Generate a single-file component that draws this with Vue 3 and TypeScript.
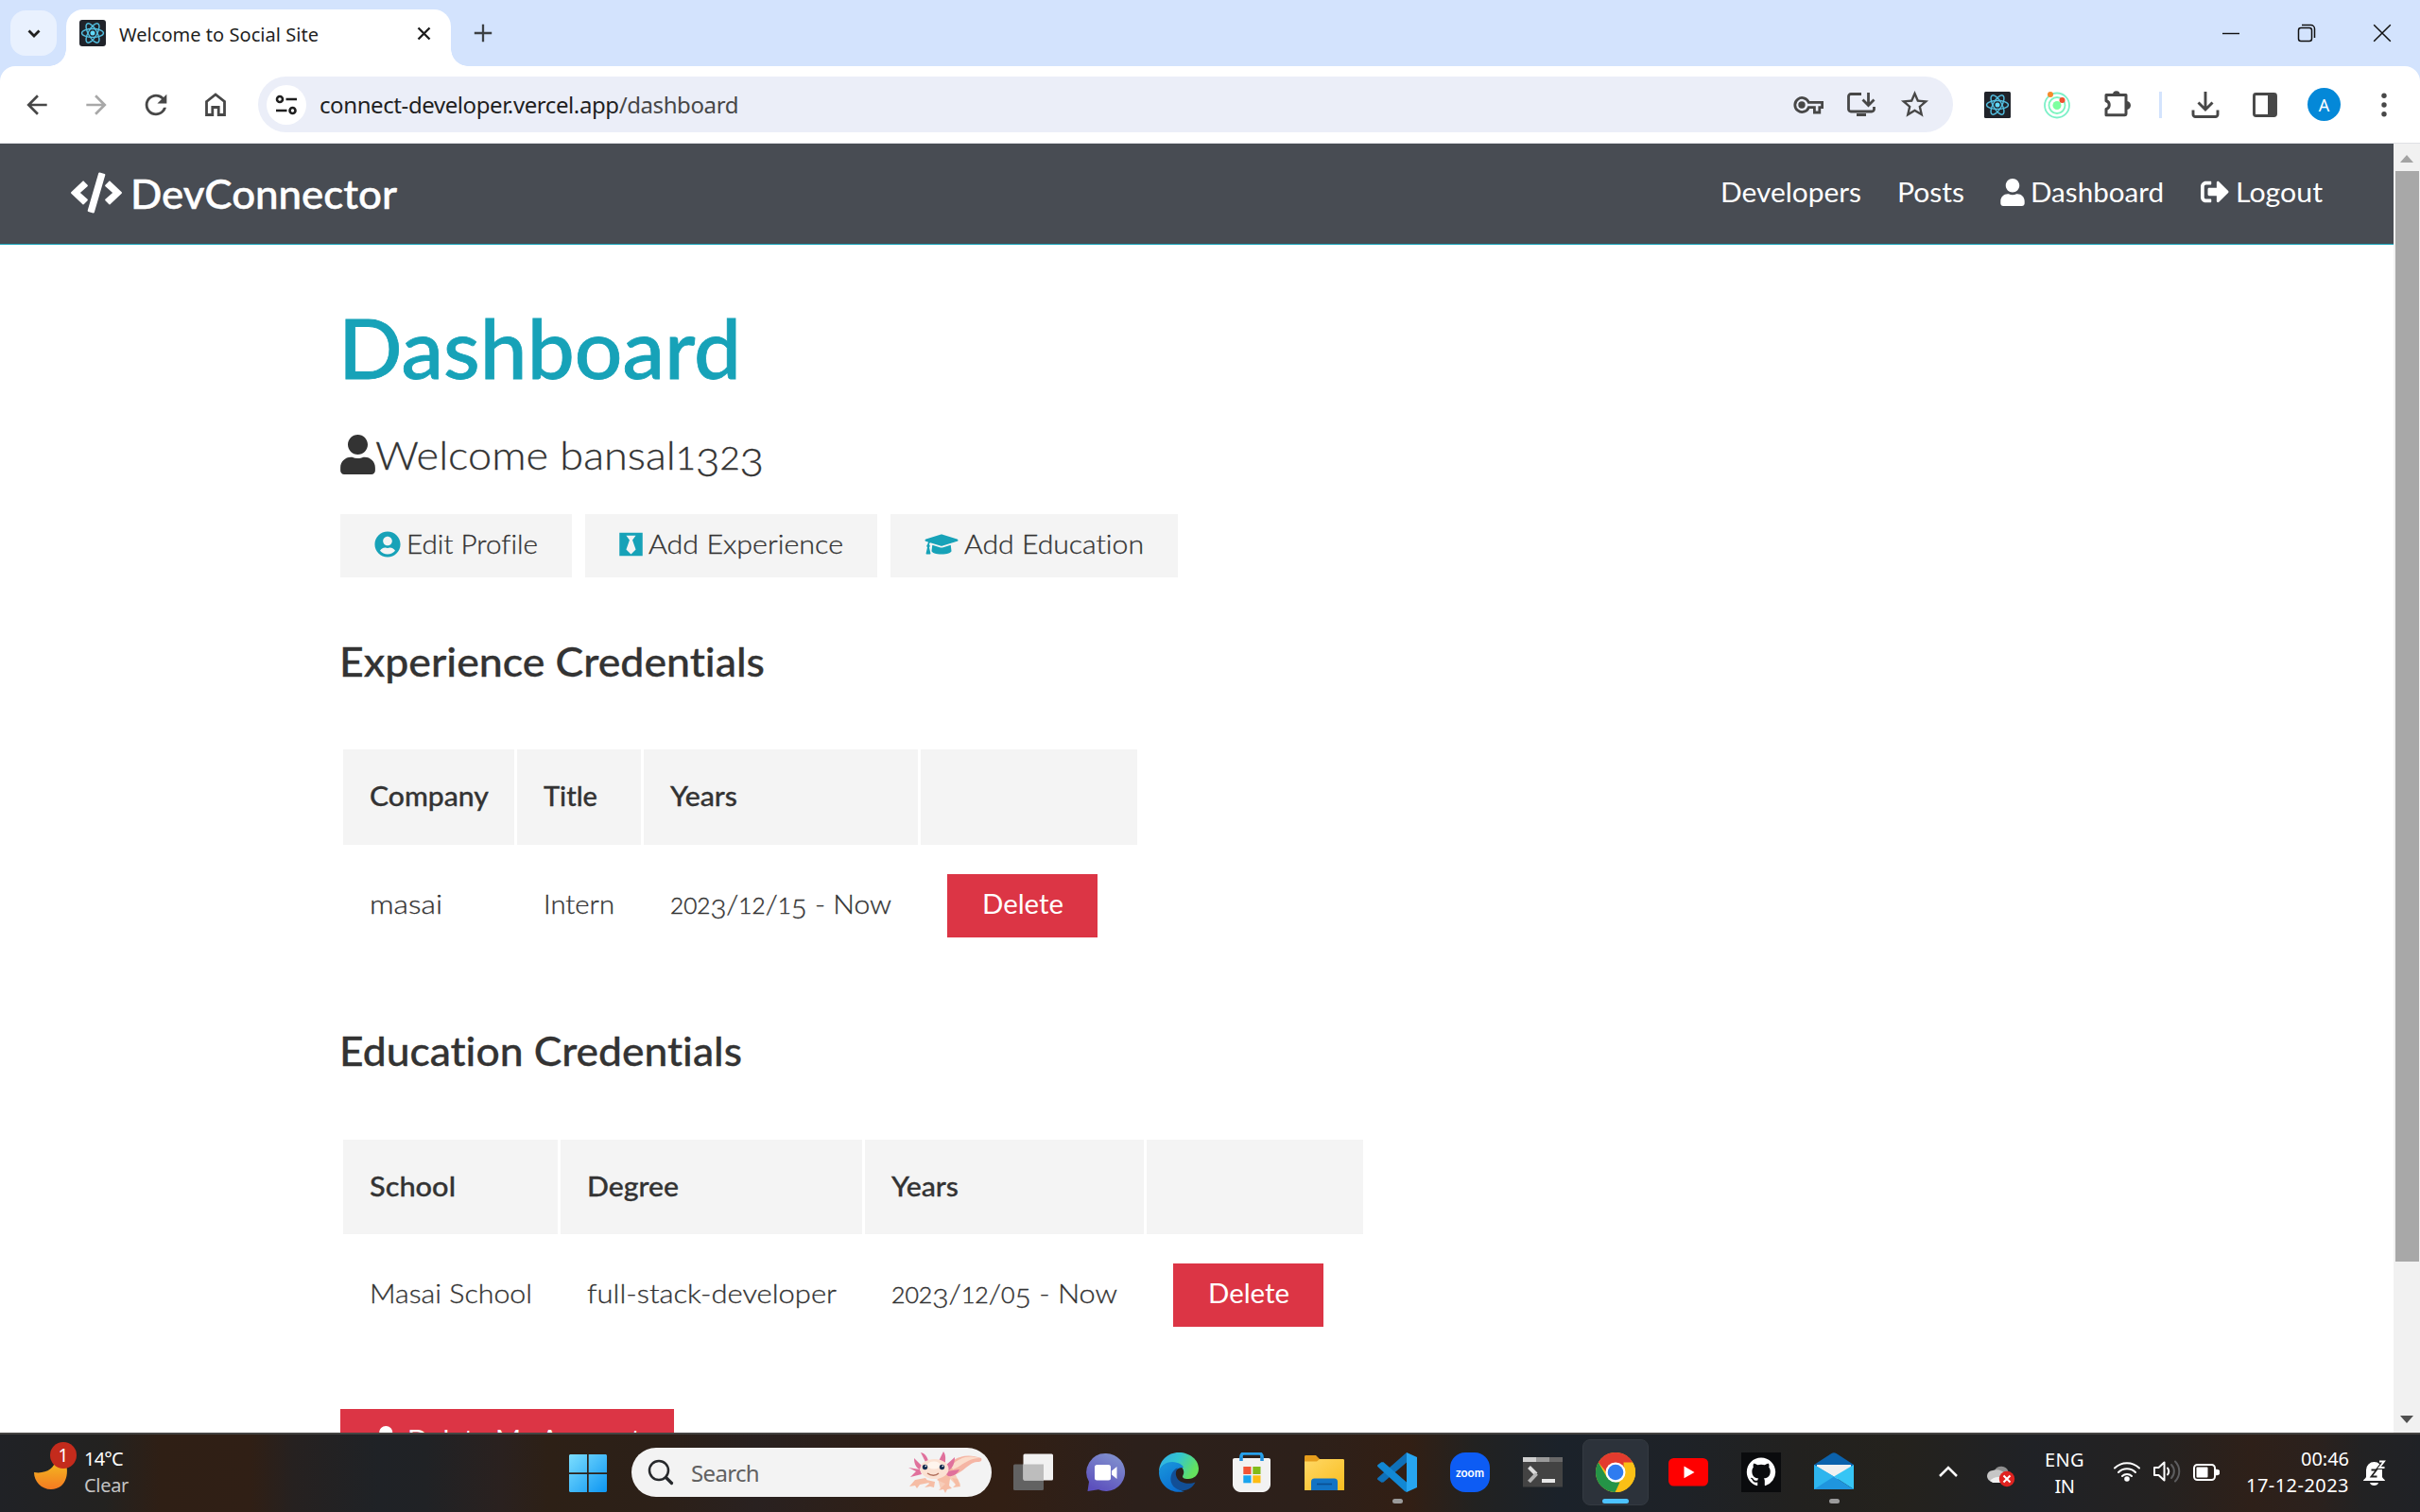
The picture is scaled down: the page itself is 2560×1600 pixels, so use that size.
<script setup lang="ts">
import type { Directive } from 'vue'

// Makes a label fill a fixed advance width: by tracking, or with the
// "stretch" argument by widening the letterforms themselves.
const vFit: Directive<HTMLElement, number> = {
  mounted(el, { value, arg }) {
    if (arg === 'stretch') {
      el.style.display = 'inline-block'
      const natural = el.getBoundingClientRect().width
      el.style.transformOrigin = '0 0'
      el.style.transform = `scaleX(${value / natural})`
      el.style.marginRight = `${value - natural}px`
      return
    }
    const count = (el.textContent ?? '').length
    const natural = el.getBoundingClientRect().width
    el.style.letterSpacing = `${(value - natural) / count}px`
  },
}

interface Label { text: string; width: number }
interface Credentials {
  title: Label
  columns: string
  head: Label[]
  row: Label[]
  id: string
}

const sections: Credentials[] = [
  {
    id: 'experience',
    title: { text: 'Experience Credentials', width: 450 },
    columns: '181px 131px 290px 229px',
    head: [
      { text: 'Company', width: 126 },
      { text: 'Title', width: 57 },
      { text: 'Years', width: 71 },
    ],
    row: [
      { text: 'masai', width: 77 },
      { text: 'Intern', width: 75 },
      { text: '2023/12/15 - Now', width: 234 },
    ],
  },
  {
    id: 'education',
    title: { text: 'Education Credentials', width: 426 },
    columns: '227px 319px 295px 229px',
    head: [
      { text: 'School', width: 91 },
      { text: 'Degree', width: 97 },
      { text: 'Years', width: 71 },
    ],
    row: [
      { text: 'Masai School', width: 172 },
      { text: 'full-stack-developer', width: 264 },
      { text: '2023/12/05 - Now', width: 239 },
    ],
  },
]

// Old-style figures: 0-2 sit at x-height, 3-9 hang below the baseline.
function figure(c: string): string {
  if (/[012]/.test(c)) return 'low'
  if (/[3-9]/.test(c)) return 'hang'
  return ''
}

// Splits a string so that only its digits get elements of their own.
function pieces(text: string): string[] {
  return text.match(/\d|\D+/g) ?? []
}

const userPath = 'M224 256c70.7 0 128-57.3 128-128S294.7 0 224 0 96 57.3 96 128s57.3 128 128 128zm89.6 32h-16.7c-22.2 10.2-46.9 16-72.9 16s-50.6-5.8-72.9-16h-16.7C60.2 288 0 348.2 0 422.4V464c0 26.5 21.5 48 48 48h352c26.5 0 48-21.5 48-48v-41.6c0-74.2-60.2-134.4-134.4-134.4z'
</script>

<template>
  <div class="screen">
    <header class="strip">
      <div class="tab-search">
        <svg width="14" height="9" viewBox="0 0 14 9"><path d="M1.5 1.5 7 7l5.500-5.500" fill="none" stroke="#1f1f1f" stroke-width="2.800" /></svg>
      </div>
      <div class="tab">
        <svg class="favicon" width="28" height="28" viewBox="0 0 28 28">
          <rect width="28" height="28" rx="3" fill="#20232a" />
          <g fill="none" stroke="#53bfe0" stroke-width="1.400">
            <ellipse cx="14" cy="14" rx="11.500" ry="4.500" />
            <ellipse cx="14" cy="14" rx="11.500" ry="4.500" transform="rotate(60 14 14)" />
            <ellipse cx="14" cy="14" rx="11.500" ry="4.500" transform="rotate(120 14 14)" />
          </g>
          <circle cx="14" cy="14" r="2.500" fill="#61dafb" />
        </svg>
        <span class="tab-title"><span v-fit="211">Welcome to Social Site</span></span>
        <svg class="tab-close" width="15" height="15" viewBox="0 0 15 15"><path d="M1.500 1.500l12 12m0-12l-12 12" stroke="#1f1f1f" stroke-width="2.400" /></svg>
      </div>
      <svg class="new-tab" width="20" height="20" viewBox="0 0 20 20"><path d="M10 .8v18.400M.8 10h18.400" stroke="#3c4043" stroke-width="2.300" /></svg>
      <div class="window-buttons">
        <svg width="20" height="20" viewBox="0 0 20 20"><path d="M1 10.500h18" stroke="#111" stroke-width="1.400" /></svg>
        <svg width="20" height="20" viewBox="0 0 20 20"><g fill="none" stroke="#111" stroke-width="1.500"><rect x="1.500" y="4.500" width="14" height="14" rx="2.500" /><path d="M5 1.500h9.500a4 4 0 0 1 4 4V15" /></g></svg>
        <svg width="20" height="20" viewBox="0 0 20 20"><path d="M1.200 1.200l17.600 17.600m0-17.600L1.200 18.800" stroke="#111" stroke-width="1.500" /></svg>
      </div>
    </header>

    <div class="toolbar-back">
      <div class="toolbar">
        <span class="tool"><svg width="32" height="32" viewBox="0 0 24 24" fill="#474747"><path d="M20 11H7.830l5.590-5.590L12 4l-8 8 8 8 1.410-1.410L7.830 13H20v-2z" /></svg></span>
        <span class="tool"><svg width="32" height="32" viewBox="0 0 24 24" fill="#a8a8a8"><path d="M12 4l-1.410 1.410L16.170 11H4v2h12.170l-5.580 5.590L12 20l8-8z" /></svg></span>
        <span class="tool"><svg width="34" height="34" viewBox="0 0 24 24" fill="#474747"><path d="M17.650 6.350A7.958 7.958 0 0 0 12 4c-4.420 0-7.990 3.580-7.990 8s3.570 8 7.990 8c3.730 0 6.840-2.550 7.730-6h-2.080A5.990 5.990 0 0 1 12 18c-3.310 0-6-2.690-6-6s2.690-6 6-6c1.660 0 3.140.69 4.220 1.780L13 11h7V4l-2.350 2.350z" /></svg></span>
        <span class="tool"><svg width="24" height="27" viewBox="0 0 24 27"><path d="M2.500 10.500 12 3l9.500 7.500V24.500h-6.300v-8H8.800v8H2.500z" fill="none" stroke="#474747" stroke-width="2.800" /></svg></span>
        <div class="omnibox">
          <span class="site-info">
            <svg width="24" height="22" viewBox="0 0 24 22" fill="none" stroke="#1f1f1f" stroke-width="2.600"><circle cx="5" cy="5" r="3" /><path d="M11.500 5H23M1 17h11.500" /><circle cx="18.500" cy="17" r="3" /></svg>
          </span>
          <span class="url"><span v-fit="443">connect-developer.vercel.app<span class="path">/dashboard</span></span></span>
          <span class="omni-tool"><svg width="32" height="20" viewBox="0 0 32 20" fill="none" stroke="#474747" stroke-width="2.800"><path d="M16.300 7.300H30.600v5.400h-2.800v5.300h-5.400v-5.300h-6.100A7.500 7.500 0 1 1 16.300 7.300z" /><circle cx="9" cy="10" r="2.300" fill="#474747" /></svg></span>
          <span class="omni-tool"><svg width="30" height="27" viewBox="0 0 30 27" fill="none" stroke="#474747" stroke-width="2.800"><path d="M15 2.500H4A2.500 2.500 0 0 0 1.500 5v13.500A2.500 2.500 0 0 0 4 21h22a2.500 2.500 0 0 0 2.500-2.500V16M22.500 1v13M16.500 8.500l6 6 6-6M10 24.500h10" /></svg></span>
          <span class="omni-tool"><svg width="35" height="35" viewBox="0 0 24 24" fill="#474747"><path d="M22 9.240l-7.190-.62L12 2 9.190 8.630 2 9.240l5.460 4.730L5.820 21 12 17.270 18.180 21l-1.630-7.030L22 9.240zM12 15.400l-3.760 2.270 1-4.280-3.320-2.880 4.380-.38L12 6.100l1.710 4.040 4.380.38-3.320 2.880 1 4.280L12 15.400z" /></svg></span>
        </div>
        <span class="tool"><svg width="28" height="28" viewBox="0 0 28 28">
          <rect width="28" height="28" rx="1.500" fill="#20232a" />
          <g fill="none" stroke="#53bfe0" stroke-width="1.400">
            <ellipse cx="14" cy="14" rx="11.500" ry="4.500" />
            <ellipse cx="14" cy="14" rx="11.500" ry="4.500" transform="rotate(60 14 14)" />
            <ellipse cx="14" cy="14" rx="11.500" ry="4.500" transform="rotate(120 14 14)" />
          </g>
          <circle cx="14" cy="14" r="2.500" fill="#61dafb" />
        </svg></span>
        <span class="tool"><svg width="30" height="30" viewBox="0 0 30 30" fill="none">
          <circle cx="15" cy="15.500" r="13" stroke="#7df0c8" stroke-width="1.800" /><circle cx="15" cy="15.500" r="8.500" stroke="#7df5c0" stroke-width="1.800" />
          <circle cx="15" cy="15.500" r="4.500" fill="#7dff9f" /><circle cx="8" cy="4" r="3" fill="#f58a2b" /><circle cx="20.500" cy="10" r="3" fill="#f0512f" />
        </svg></span>
        <span class="tool puzzle"><svg width="30" height="29" viewBox="0 0 30 29"><path d="M3 5.500h21v19.700c0 .9-.6 1.500-1.500 1.500H3v-6.200a4.600 4.600 0 0 0 0-8.800z" fill="none" stroke="#474747" stroke-width="3" stroke-linejoin="round" /><path d="M10 5a3.800 3.800 0 0 1 7.600 0zM24.500 12a4.500 4.500 0 0 1 0 9z" fill="#474747" /></svg></span>
        <span class="divider"></span>
        <span class="tool"><svg width="30" height="28" viewBox="0 0 30 28" fill="none" stroke="#474747" stroke-width="2.900"><path d="M15 0v18M7.500 11.500 15 19l7.500-7.500M2 19.500V24a2.400 2.400 0 0 0 2.400 2.500h21.200A2.400 2.400 0 0 0 28 24v-4.500" /></svg></span>
        <span class="tool"><svg width="26" height="26" viewBox="0 0 26 26"><rect x="1.500" y="1.500" width="23" height="23" rx="2" fill="none" stroke="#474747" stroke-width="2.900" /><path d="M16 1h8v24h-8z" fill="#474747" /></svg></span>
        <span class="tool"><span class="avatar">A</span></span>
        <span class="tool"><svg width="6" height="26" viewBox="0 0 6 26" fill="#474747"><circle cx="3" cy="3.200" r="2.700" /><circle cx="3" cy="13" r="2.700" /><circle cx="3" cy="22.800" r="2.700" /></svg></span>
      </div>
    </div>

    <div class="viewport">
      <div class="page">
        <nav class="navbar">
          <svg class="code" width="54" height="44" viewBox="0 0 640 512" fill="#fff"><path d="M278.900 511.500l-61-17.700c-6.400-1.800-10-8.500-8.200-14.900L346.200 8.700c1.800-6.400 8.500-10 14.900-8.200l61 17.700c6.400 1.800 10 8.500 8.200 14.900L293.800 503.300c-1.900 6.400-8.500 10.100-14.900 8.200zm-114-112.200l43.500-46.400c4.600-4.900 4.300-12.700-.8-17.200L117 256l90.600-79.700c5.100-4.500 5.500-12.300.8-17.200l-43.500-46.400c-4.500-4.800-12.100-5.100-17-.5L3.800 247.200c-5.100 4.700-5.100 12.800 0 17.500l144.100 135.100c4.900 4.600 12.500 4.400 17-.5zm327.200.6l144.100-135.100c5.100-4.700 5.100-12.800 0-17.500L492.100 112.100c-4.800-4.500-12.400-4.300-17 .5L431.600 159c-4.600 4.900-4.300 12.700.8 17.200L523 256l-90.600 79.700c-5.100 4.500-5.500 12.300-.8 17.200l43.500 46.400c4.500 4.900 12.100 5.100 17 .6z" /></svg>
          <span class="brand"><span v-fit:stretch="282">DevConnector</span></span>
          <span class="link developers"><span v-fit:stretch="149">Developers</span></span>
          <span class="link posts"><span v-fit:stretch="71">Posts</span></span>
          <svg class="nav-user" width="26" height="29" viewBox="0 0 448 512" fill="#fff"><path :d="userPath" /></svg>
          <span class="link"><span v-fit:stretch="141">Dashboard</span></span>
          <svg class="nav-out" width="30" height="30" viewBox="0 0 512 512" fill="#fff"><path d="M497 273L329 441c-15 15-41 4.500-41-17v-96H152c-13.300 0-24-10.700-24-24v-96c0-13.300 10.700-24 24-24h136V88c0-21.400 25.900-32 41-17l168 168c9.300 9.400 9.300 24.600 0 34zM192 436v-40c0-6.600-5.400-12-12-12H96c-17.700 0-32-14.300-32-32V160c0-17.700 14.300-32 32-32h84c6.600 0 12-5.400 12-12V76c0-6.600-5.400-12-12-12H96c-53 0-96 43-96 96v192c0 53 43 96 96 96h84c6.600 0 12-5.400 12-12z" /></svg>
          <span class="link"><span v-fit:stretch="92">Logout</span></span>
        </nav>

        <main class="container">
          <h1><span v-fit:stretch="426">Dashboard</span></h1>
          <p class="welcome">
            <svg width="37" height="42" viewBox="0 0 448 512" fill="#333"><path :d="userPath" /></svg>
            <span v-fit:stretch="411">Welcome bansal<span v-for="(c, i) in '1323'" :key="i" :class="figure(c)">{{ c }}</span></span>
          </p>
          <div class="actions">
            <a class="btn edit"><svg width="28" height="28" viewBox="0 0 496 512"><path d="M248 8C111 8 0 119 0 256s111 248 248 248 248-111 248-248S385 8 248 8zm0 96c48.600 0 88 39.400 88 88s-39.400 88-88 88-88-39.400-88-88 39.400-88 88-88zm0 344c-58.700 0-111.300-26.600-146.500-68.200 18.800-35.400 55.600-59.800 98.500-59.800 2.400 0 4.800.4 7.100 1.100 13 4.200 26.600 6.900 40.900 6.900 14.300 0 28-2.700 40.900-6.900 2.300-.7 4.700-1.100 7.100-1.100 42.900 0 79.700 24.400 98.500 59.800C359.300 421.400 306.700 448 248 448z" /></svg><span v-fit:stretch="139">Edit Profile</span></a>
            <a class="btn exp"><svg width="25" height="28" viewBox="0 0 448 512"><path d="M0 32v448h448V32H0zm316.500 325.200L224 445.900l-92.500-88.700 64.500-184-64.500-86.600h184.900L252 173.200l64.500 184z" /></svg><span v-fit:stretch="206">Add Experience</span></a>
            <a class="btn edu"><svg width="36" height="28" viewBox="0 0 640 512"><path d="M622.340 153.200L343.400 67.500c-15.200-4.670-31.600-4.670-46.790 0L17.660 153.200c-23.540 7.230-23.540 38.360 0 45.590l48.630 14.940c-10.670 13.190-17.230 29.280-17.880 46.900C38.780 266.150 32 276.110 32 288c0 10.780 5.680 19.850 13.860 25.650L20.330 428.530C18.110 438.520 25.710 448 35.940 448h56.110c10.240 0 17.840-9.480 15.620-19.470L82.140 313.650C90.320 307.850 96 298.780 96 288c0-11.570-6.470-21.250-15.660-26.870.76-15.020 8.440-28.300 20.690-36.720L296.600 284.500c9.060 2.780 26.440 6.250 46.790 0l278.950-85.700c23.550-7.240 23.550-38.360 0-45.600zM352.790 315.090c-28.530 8.760-52.840 3.920-65.590 0l-145.020-44.550L128 384c0 35.350 85.960 64 192 64s192-28.650 192-64l-14.180-113.470-145.030 44.560z" /></svg><span v-fit:stretch="190">Add Education</span></a>
          </div>

          <section v-for="s in sections" :key="s.id" :class="s.id">
            <h2><span v-fit:stretch="s.title.width">{{ s.title.text }}</span></h2>
            <div class="table" :style="{ gridTemplateColumns: s.columns }">
              <div v-for="h in s.head" :key="h.text" class="th"><span v-fit:stretch="h.width">{{ h.text }}</span></div>
              <div class="th"></div>
              <div v-for="d in s.row" :key="d.text" class="td"><span v-fit:stretch="d.width"><span v-for="(c, i) in pieces(d.text)" :key="i" :class="figure(c)">{{ c }}</span></span></div>
              <div class="td"><button class="danger"><span v-fit:stretch="86">Delete</span></button></div>
            </div>
          </section>

          <button class="danger account">
            <svg width="35" height="28" viewBox="0 0 640 512" fill="#fff"><path d="M624 208H432c-8.800 0-16 7.200-16 16v32c0 8.800 7.200 16 16 16h192c8.800 0 16-7.200 16-16v-32c0-8.800-7.200-16-16-16zm-400 48c70.700 0 128-57.300 128-128S294.700 0 224 0 96 57.300 96 128s57.300 128 128 128z" /></svg>
            <span v-fit:stretch="247">Delete My Account</span>
          </button>
        </main>
      </div>
      <div class="scrollbar">
        <svg width="14" height="8" viewBox="0 0 14 8"><path d="M7 0l7 8H0z" fill="#a3a3a3" /></svg>
        <div class="thumb"></div>
        <svg class="down" width="14" height="8" viewBox="0 0 14 8"><path d="M7 8l7-8H0z" fill="#505050" /></svg>
      </div>
    </div>

    <footer class="taskbar">
      <svg class="moon" width="48" height="52" viewBox="0 0 48 52">
        <defs><linearGradient id="moonFill" x1="0" y1="0" x2="0" y2="1"><stop offset="0" stop-color="#f3c421" /><stop offset="1" stop-color="#f47a21" /></linearGradient></defs>
        <path d="M3 32c12 2 22-4 23-14l8-2c8 14 4 34-13 34C11 50 3 42 3 32z" fill="url(#moonFill)" />
        <circle cx="34" cy="14" r="14" fill="#c42b1c" />
        <text x="34" y="21" text-anchor="middle" font-family="Noto Sans, sans-serif" font-size="19" fill="#fff">1</text>
      </svg>
      <div class="weather"><span><span v-fit="41">14°C</span></span><span class="dim"><span v-fit="47">Clear</span></span></div>

      <svg class="start" width="42" height="42" viewBox="0 0 42 42">
        <defs><linearGradient id="win" gradientUnits="userSpaceOnUse" x1="0" y1="0" x2="42" y2="42"><stop offset="0" stop-color="#7fe0ff" /><stop offset="1" stop-color="#0a94f2" /></linearGradient></defs>
        <g fill="url(#win)"><path d="M2.500 1H20v19.300H1V2.500C1 1.700 1.700 1 2.500 1zM21.700 1H39.500c.8 0 1.500.7 1.500 1.500v17.800H21.700zM1 22h19v19H2.500c-.8 0-1.500-.7-1.500-1.500zM21.700 22H41v17.500c0 .8-.7 1.500-1.500 1.500H21.700z" /></g>
      </svg>

      <div class="search">
        <svg width="28" height="28" viewBox="0 0 28 28" fill="none" stroke="#26282b" stroke-width="2.500" stroke-linecap="round"><circle cx="12" cy="12" r="10" /><path d="M19.500 19.500 25.500 25.500" stroke-width="3.200" /></svg>
        <span class="placeholder"><span v-fit="72">Search</span></span>
        <svg class="axolotl" width="80" height="46" viewBox="0 0 80 46">
          <path d="M40 17C50 7 62 2 78 8c1 2 0 4-3 4-9-1-14 10-28 15z" fill="#f5b5a4" />
          <path d="M46 16C54 8 63 4 76 8c-12 0-18 8-28 12z" fill="#fbdccb" />
          <path d="M30 22c10-3 20 0 22 6l4 8-4 1-7-7-4 8-6 3-3-12z" fill="#f7cdb9" />
          <g fill="#e0719c"><path d="M19 12 14 2c5 1 7 5 8 9zM33 11 38 1c3 4 2 8 2 12zM15 16 7 8c0 6 2 10 6 12zM13 20 1 18l8 4-6 6 12-3zM40 16l10-9c0 6-2 12-8 15zM41 22l14-2c-3 6-8 8-14 7z" /></g>
          <path d="M19 29 8 31l-6 7 6-1 2 3 3-4 10-2zM31 31l9 4-7 7 5-1 2 4 2-4 5-1-3-3 1-8-5-5zM20 31l3 4-5 4 6-1 4 1 1-6zM47 29l4 7-3 3 8-1-3-8z" fill="#f6bda5" />
          <ellipse cx="28.500" cy="19.500" rx="15" ry="10.500" fill="#fbe1d2" />
          <ellipse cx="28" cy="15.500" rx="7" ry="4" fill="#fff5ed" />
          <g fill="#152c50"><circle cx="18.500" cy="17.500" r="2.700" /><circle cx="36.500" cy="17.500" r="2.700" /></g>
          <g fill="#fff"><circle cx="19.300" cy="16.400" r=".8" /><circle cx="37.300" cy="16.400" r=".8" /></g>
          <path d="M21 24c4 3 9 3 12 0" fill="none" stroke="#b06f5b" stroke-width="1.400" />
        </svg>
      </div>

      <div class="apps">
        <span class="app"><svg viewBox="0 0 42 42">
          <rect y="12.500" width="32" height="27.500" rx="1.500" fill="#626262" /><rect x="10.500" y="1.500" width="31.500" height="28" rx="1.500" fill="#f1f1f1" /><path d="M10.500 12.500H32v17H12a1.500 1.500 0 0 1-1.500-1.500z" fill="#bdbdbd" />
        </svg></span>
        <span class="app"><svg viewBox="0 0 42 42">
          <defs><linearGradient id="chat" x1=".8" y1="0" x2=".3" y2="1"><stop offset="0" stop-color="#8293cf" /><stop offset="1" stop-color="#5c4fbd" /></linearGradient></defs>
          <path d="M21 1a20 20 0 1 1-8 38.300L1.500 41 3 31A20 20 0 0 1 21 1z" fill="url(#chat)" /><rect x="9" y="13" width="17" height="16.500" rx="2.500" fill="#fff" /><path d="M27 19.500l5.500-4.500v13L27 23.500z" fill="#fff" />
        </svg></span>
        <span class="app"><svg viewBox="0 0 42 42">
          <defs>
            <linearGradient id="edgeTop" x1="0" y1="0" x2="1" y2=".4"><stop offset="0" stop-color="#2fa9ec" /><stop offset=".5" stop-color="#33c6cf" /><stop offset="1" stop-color="#64e25e" /></linearGradient>
            <linearGradient id="edgeBlue" x1="0" y1="0" x2=".5" y2="1"><stop offset="0" stop-color="#1a98dc" /><stop offset="1" stop-color="#0b6fd0" /></linearGradient>
          </defs>
          <path d="M0 21C0 9 9 0 21 0s21 8 21 17c0 7-5 11-11 11-5 0-7-1.500-5.500-4C28 20 25 12 14 11 6 11 2 15 0 21z" fill="url(#edgeTop)" />
          <path d="M0 21c1-7 7-11 14-11 7 .5 11 3 12 6-6-1-12 5-11 12 1 8 7 13 12 13C13 45 0 34 0 21z" fill="url(#edgeBlue)" />
          <path d="M18 17c-7 5-8 16 0 21 8 5 17 1 20.500-6.500-7 3-19 1-20.500-7.500-.5-3 .5-5.500 2-7.500z" fill="#124f96" />
        </svg></span>
        <span class="app"><svg viewBox="0 0 42 42">
          <path d="M10 10V4a3 3 0 0 1 3-3h16a3 3 0 0 1 3 3v6" fill="none" stroke="#27a0ea" stroke-width="3.500" /><path d="M3 6h36c1.200 0 2 .8 2 2v26c0 4-4 8-8 8H9c-4 0-8-4-8-8V8c0-1.200.8-2 2-2z" fill="#f2f2f2" /><path d="M10 9V5m22 4V5" stroke="#1c8fdd" stroke-width="3.500" />
          <path d="M12.300 15h8.200v8h-8.200z" fill="#f25435" /><path d="M22.300 15h8.200v8h-8.200z" fill="#82bb18" /><path d="M12.300 24.300h8.200v8h-8.200z" fill="#18a4ee" /><path d="M22.300 24.300h8.200v8h-8.200z" fill="#fdbc11" />
        </svg></span>
        <span class="app"><svg viewBox="0 0 42 42">
          <defs><linearGradient id="folder" x1="0" y1="0" x2="1" y2="1"><stop offset="0" stop-color="#ffd865" /><stop offset="1" stop-color="#f9bd1f" /></linearGradient></defs>
          <path d="M0 4.500C0 3.500.5 3 1.500 3H12l4 4v6H0z" fill="#e69d1c" /><path d="M0 9.500h13l3-2.500h24.500c1 0 1.500.5 1.500 1.500V40H0z" fill="url(#folder)" /><path d="M7 40V31a3.500 3.500 0 0 1 3.500-3.500h21A3.500 3.500 0 0 1 35 31v9z" fill="#1273c4" /><path d="M13 33.500h16" stroke="#0b4f92" stroke-width="1.600" />
        </svg></span>
        <span class="app running"><svg viewBox="0 0 42 42">
          <path d="M31 0l11 5v32l-11 5z" fill="#27a6f2" /><path d="M31 10.500 6.500 31.500l-2 .2L.6 29c-.8-.6-.8-1.500 0-2.200L31 0z" fill="#0f70b8" /><path d="M31 31.500 6.500 10.300l-2.200-.1L.6 13c-.8.600-.8 1.500 0 2.200L29 41l2 1z" fill="#1288d4" />
        </svg></span>
        <span class="app"><svg viewBox="0 0 42 42">
          <rect width="42" height="42" rx="16" fill="#0d5cf4" /><text x="21" y="25.500" text-anchor="middle" font-family="Lato, sans-serif" font-weight="700" font-size="14" textLength="30" lengthAdjust="spacingAndGlyphs" fill="#fff">zoom</text>
        </svg></span>
        <span class="app"><svg viewBox="0 0 42 42">
          <path d="M0 5h42v31.500H0z" fill="#434343" /><path d="M0 5h14v5H0z" fill="#cfcfcf" /><path d="M14 5h14v5H14z" fill="#9a9a9a" /><path d="M28 5h14v5H28z" fill="#686868" /><path d="M6.500 15.500 14 23" stroke="#dedede" stroke-width="4" /><path d="M14.500 22.500 6.500 31" stroke="#b5b5b5" stroke-width="4" /><path d="M20 28h14v4H20z" fill="#e8e8e8" />
        </svg></span>
        <span class="app active"><svg viewBox="0 0 42 42">
          <circle cx="21" cy="21" r="21" fill="#fbc016" /><path d="M21 21H11.500l-8.700-10.500A21 21 0 0 1 39.200 10.500z" fill="#e33b2e" /><path d="M2.800 10.500 12 26.500l9 5h4.500L20.700 42A21 21 0 0 1 2.800 10.500z" fill="#249447" /><path d="M20.700 42 30 26.500 29.500 10.500h9.700A21 21 0 0 1 20.700 42z" fill="#fbc016" /><circle cx="21" cy="21" r="10.500" fill="#fff" /><circle cx="21" cy="21" r="8.300" fill="#2f7cf0" />
        </svg></span>
        <span class="app"><svg viewBox="0 0 42 42"><rect y="6" width="42" height="29.500" rx="5.500" fill="#f00" /><path d="M16.500 14.500v12.800L27.500 21z" fill="#fff" /></svg></span>
        <span class="app"><svg viewBox="0 0 42 42">
          <path d="M0 0h42v42H0z" fill="#0a0b0d" /><g transform="translate(5.800 5.500) scale(1.900)"><path fill="#fff" d="M8 0C3.580 0 0 3.580 0 8c0 3.540 2.290 6.530 5.470 7.590.4.07.55-.17.55-.38 0-.19-.01-.82-.01-1.490-2.010.37-2.530-.49-2.690-.94-.09-.23-.48-.94-.82-1.130-.28-.15-.68-.52-.01-.53.63-.01 1.080.58 1.230.82.72 1.210 1.870.87 2.330.66.07-.52.28-.87.51-1.070-1.780-.2-3.640-.89-3.640-3.950 0-.87.31-1.590.82-2.150-.08-.2-.36-1.020.08-2.120 0 0 .67-.21 2.200.82.64-.18 1.320-.27 2-.27s1.360.09 2 .27c1.530-1.040 2.200-.82 2.200-.82.44 1.100.16 1.920.08 2.120.51.56.82 1.270.82 2.150 0 3.070-1.870 3.750-3.650 3.950.29.25.54.73.54 1.480 0 1.070-.01 1.930-.01 2.200 0 .21.15.46.55.38A8.010 8.010 0 0 0 16 8c0-4.420-3.580-8-8-8z" /></g>
        </svg></span>
        <span class="app running"><svg viewBox="0 0 42 42">
          <path d="M0 13 18.500 1c1.600-1 3.400-1 5 0L42 13v5H0z" fill="#0b62ac" /><path d="M3 13h36v10L21 30 3 23z" fill="#f1f1f1" /><path d="M42 13v26L21 25.500z" fill="#36c5f5" /><path d="M0 13 21 25.500 42 39H0z" fill="#1f95de" /><path d="M0 13 21 25.500 0 39z" fill="#2eb5ee" />
        </svg></span>
      </div>

      <div class="tray">
        <svg class="chevron" width="22" height="14" viewBox="0 0 22 14"><path d="M2 12 11 3l9 9" fill="none" stroke="#fff" stroke-width="2.500" /></svg>
        <svg class="cloud" width="30" height="26" viewBox="0 0 30 26"><path d="M8 8a8 8 0 0 1 14.500 1L25 14H8z" fill="#8f8f8f" /><path d="M6 20a6 6 0 0 1 0-12c5-2 10 0 14 4l-5 8z" fill="#c6c6c6" /><path d="M3 19c4-4 8-5 14-3v5H6z" fill="#f0f0f0" /><circle cx="21" cy="17" r="8.200" fill="#e02320" /><path d="M17.500 13.500l7 7m0-7l-7 7" stroke="#fff" stroke-width="2" /></svg>
        <div class="lang"><span><span v-fit="42">ENG</span></span><span><span v-fit="21">IN</span></span></div>
        <svg class="wifi" width="30" height="24" viewBox="0 0 30 24" fill="none" stroke="#fff" stroke-width="2" stroke-linecap="round"><path d="M2 8.500a18.500 18.500 0 0 1 26 0M6 13a12.700 12.700 0 0 1 18 0M10 17a7 7 0 0 1 10 0" /><circle cx="15" cy="20" r="1.800" fill="#fff" /></svg>
        <svg class="sound" width="30" height="26" viewBox="0 0 30 26" fill="none" stroke-width="2" stroke-linecap="round"><path d="M2 9h4.500l6-5.500v19L6.500 17H2z" stroke="#fff" stroke-linejoin="round" /><path d="M16 9.500a6 6 0 0 1 0 7" stroke="#fff" /><path d="M20 6a10 10 0 0 1 0 14M24 2.500a15 15 0 0 1 0 21" stroke="#5d5d5f" /></svg>
        <svg class="battery" width="30" height="20" viewBox="0 0 30 20"><rect x="2" y="2" width="22" height="16" rx="3.500" fill="none" stroke="#fff" stroke-width="2" /><rect x="4.500" y="4.500" width="12" height="11" rx="1" fill="#fff" /><path d="M25.500 7l3 1v4l-3 1z" fill="#fff" stroke="#fff" /></svg>
        <div class="clock"><span><span v-fit="51">00:46</span></span><span><span v-fit="109">17-12-2023</span></span></div>
        <svg class="bell" width="26" height="30" viewBox="0 0 26 30"><path d="M1 23c0-1.500 2.200-2 3-4v-7.500a8.500 8.500 0 0 1 17 0V19c.8 2 3 2.500 3 4zM8 25h9c-.6 4-8.400 4-9 0z" fill="#fff" /><path d="M9.500 11.500h5.500l-5.500 7h6" fill="none" stroke="#222" stroke-width="1.800" /><path d="M18 2.500h5L18 9h5.500" fill="none" stroke="#222" stroke-width="4" /><path d="M18 2.500h5L18 9h5.500" fill="none" stroke="#fff" stroke-width="1.900" /></svg>
      </div>
    </footer>
  </div>
</template>

<style>
body { margin: 0; background: #fff; overflow: hidden; }
</style>

<style scoped>
.screen { width: 2560px; height: 1600px; display: flex; flex-direction: column; overflow: hidden; font-family: "Noto Sans", "Open Sans", sans-serif; color: #1f1f1f; }
.screen * { box-sizing: border-box; }
svg { display: block; flex: none; }
span { white-space: pre; }

.strip { height: 70px; flex: none; background: #d3e3fd; display: flex; align-items: flex-start; }
.tab-search { width: 49px; height: 48px; margin: 11px 10px 0 11px; border-radius: 16px; background: #e9f1fe; display: flex; align-items: center; justify-content: center; }
.tab { position: relative; width: 407px; height: 60px; margin-top: 10px; border-radius: 18px 18px 0 0; background: #fff; display: flex; align-items: flex-start; padding-left: 14px; }
.tab::before, .tab::after { content: ""; position: absolute; bottom: 0; width: 18px; height: 18px; }
.tab::before { left: -18px; background: radial-gradient(circle at 0 0, transparent 17.5px, #fff 18px); }
.tab::after { right: -18px; background: radial-gradient(circle at 100% 0, transparent 17.5px, #fff 18px); }
.favicon { margin-top: 11px; }
.tab-title { width: 315px; margin-left: 14px; font-size: 20px; line-height: 30px; margin-top: 12px; }
.tab-close { margin-top: 18px; }
.new-tab { margin: 25px 0 0 24px; }
.window-buttons { margin: 25px 30px 0 auto; display: flex; gap: 60px; }

.toolbar-back { height: 82px; flex: none; background: #d3e3fd; }
.toolbar { height: 82px; background: #fff; border-radius: 16px 16px 0 0; border-bottom: 1px solid #dfe1e5; display: flex; align-items: center; padding: 0 7px; }
.tool { width: 63px; height: 60px; flex: none; display: flex; align-items: center; justify-content: center; }
.puzzle { padding: 0 0 2px 2px; }
.omnibox { width: 1793px; height: 59px; margin: 0 15px 0 14px; flex: none; background: #ebeef8; border-radius: 30px; display: flex; align-items: center; padding: 0 13px 0 9px; }
.site-info { width: 42px; height: 42px; border-radius: 50%; background: #fff; display: flex; align-items: center; justify-content: center; }
.url { flex: 1; margin-left: 14px; font-size: 24px; line-height: 40px; }
.path { color: #474747; }
.omni-tool { width: 56px; height: 42px; display: flex; align-items: center; justify-content: center; }
.divider { width: 3px; height: 28px; margin: 0 14px; background: #d3e3fd; }
.avatar { width: 35px; height: 35px; border-radius: 50%; background: #0488d8; color: #fff; font-size: 18px; line-height: 36px; text-align: center; }

.viewport { height: 1364px; flex: none; display: flex; overflow: hidden; }
.page { width: 2532px; height: 1364px; overflow: hidden; font-family: Lato, "Open Sans", sans-serif; font-size: 28px; font-weight: 300; font-variant-ligatures: none; color: #333; -webkit-text-stroke: 0.3px currentColor; }
.navbar { height: 107px; background: #484c53; border-bottom: 1px solid #17a2b8; display: flex; align-items: flex-start; color: #fff; -webkit-text-stroke: 0; }
.code { margin: 30px 0 0 75px; }
.brand { margin: 28px 0 0 9px; font-size: 42px; line-height: 50px; font-weight: 500; -webkit-text-stroke: 0.5px currentColor; }
.link { margin-top: 34px; line-height: 34px; font-weight: 400; }
.developers { margin-left: auto; }
.posts { margin-left: 38px; }
.nav-user { margin: 37px 6px 0 38px; }
.nav-out { margin: 36px 7px 0 39px; }
.navbar > .link:last-child { margin-right: 75px; }

.container { padding-left: 360px; }
h1 { margin: 57px 0 36px -2px; font-size: 87px; line-height: 104px; font-weight: 500; color: #17a2b8; -webkit-text-stroke: 0.8px currentColor; }
.welcome { margin: 0 0 38px; font-size: 42px; line-height: 50px; height: 50px; display: flex; }
.welcome svg { margin-top: 4px; }
.actions { display: flex; gap: 14px; }
.btn { height: 67px; background: #f4f4f4; display: flex; align-items: flex-start; line-height: 34px; }
.btn span { margin-top: 14px; }
.btn svg { fill: #17a2b8; margin-top: 18px; }
.edit { width: 245px; padding-left: 36px; gap: 6px; }
.exp { width: 309px; padding-left: 36px; gap: 6px; }
.edu { width: 304px; padding-left: 36px; gap: 6px; }
h2 { margin: 64px 0 68px -1px; font-size: 42px; line-height: 50px; font-weight: 500; }
.education h2 { margin: 67px 0 69px -1px; }
.table { display: grid; gap: 3px; margin-left: 3px; grid-template-rows: 101px 123px; }
.education .table { grid-template-rows: 100px 123px; }
.th { background: #f4f4f4; padding: 32px 0 0 28px; line-height: 34px; font-weight: 500; }
.td { padding: 42px 0 0 28px; line-height: 34px; }
.td:last-child { padding-top: 28px; }
.low { font-size: 0.81em; line-height: 0; -webkit-text-stroke: 0.45px currentColor; }
.hang { font-size: 0.97em; line-height: 0; vertical-align: -0.18em; }
.danger { display: flex; align-items: flex-start; justify-content: center; width: 159px; height: 67px; padding: 14px 0 0; border: 0; background: #dc3545; color: #fff; font: 400 28px/34px Lato, "Open Sans", sans-serif; -webkit-text-stroke: 0; }
.account { width: 353px; margin-top: 59px; justify-content: flex-start; padding: 15px 0 0 36px; }
.account svg { margin: 3px 0 0; }

.scrollbar { width: 28px; background: #f1f1f1; display: flex; flex-direction: column; align-items: center; padding-top: 12px; }
.thumb { width: 25px; height: 1154px; margin-top: 9px; background: #a8a8a8; }
.down { margin-top: 163px; }

.taskbar { height: 84px; flex: none; border-top: 2px solid #454442; display: flex; align-items: flex-start; color: #fff; font-size: 20px; background: linear-gradient(90deg, #202226 0, #232220 110px, #2f1f15 170px, #301f15 265px, #262120 310px, #1f2226 400px, #202225 450px, #2a211f 530px, #2d2016 580px, #2c2018 700px, #292120 800px, #301f15 960px, #321f14 1060px, #2c201b 1200px, #2d201a 1380px, #321f14 1490px, #222221 1560px, #1b222a 1650px, #1e2227 1780px, #22211f 1900px, #24221d 2010px, #202226 2150px, #242221 2280px, #2e2019 2380px, #2b211d 2450px, #222223 2500px, #202226 2560px); }
.moon { margin: 8px 0 0 33px; }
.weather { width: 60px; margin: 12px 0 0 8px; display: flex; flex-direction: column; line-height: 28px; }
.weather > span, .lang > span, .clock > span { display: block; height: 28px; }
.dim { color: #c4c4c4; }
.start { margin: 20px 0 0 452px; }
.search { width: 381px; height: 52px; margin: 14px 0 0 25px; flex: none; border-radius: 26px; background: #f3f3f3; display: flex; align-items: center; padding-left: 17px; }
.placeholder { width: 229px; margin-left: 18px; padding-top: 1px; font-size: 24px; line-height: 40px; color: #616161; }
.apps { display: flex; margin: 5px 0 0 9px; gap: 7px; }
.app { width: 70px; height: 70px; flex: none; border-radius: 8px; display: flex; flex-direction: column; align-items: center; padding-top: 14px; }
.app svg { width: 42px; height: 42px; }
.running::after { content: ""; width: 11px; height: 5px; margin-top: 7px; border-radius: 3px; background: #9b9b9b; }
.active { background: #2c323a; border: 1px solid #343a41; padding-top: 13px; }
.active::after { content: ""; width: 28px; height: 5px; margin-top: 7px; border-radius: 3px; background: #4cc2ff; }
.tray { display: flex; align-items: flex-start; margin-left: 75px; }
.chevron { margin-top: 32px; }
.cloud { margin: 30px 0 0 30px; }
.lang { width: 42px; margin: 13px 0 0 31px; text-align: center; line-height: 28px; }
.wifi { margin: 27px 0 0 30px; }
.sound { margin: 26px 0 0 12px; }
.battery { margin: 30px 0 0 12px; }
.clock { width: 109px; margin: 12px 0 0 27px; display: flex; flex-direction: column; align-items: flex-end; line-height: 28px; }
.bell { margin: 26px 0 0 14px; }
</style>
